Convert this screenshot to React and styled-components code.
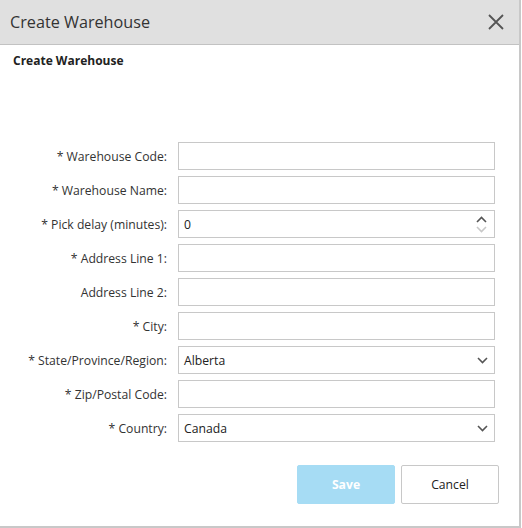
import React from "react";
import styled, { createGlobalStyle } from "styled-components";

const Global = createGlobalStyle`
  html, body { margin: 0; padding: 0; background: #ffffff; }
  body { font-family: "Open Sans", "Noto Sans", sans-serif; color: #333; }
  * { box-sizing: border-box; }
`;

const Dialog = styled.div`
  width: 521px;
  height: 528px;
  border-right: 2px solid #c8c8c8;
  border-bottom: 2px solid #c8c8c8;
  display: flex;
  flex-direction: column;
  background: #fff;
`;

const Header = styled.div`
  height: 45px;
  background: #e0e0e0;
  border-bottom: 1px solid #c2c2c2;
  display: flex;
  align-items: center;
  justify-content: space-between;
  padding: 0 14px 0 10px;
`;

const Title = styled.div`
  font-size: 16.2px;
  color: #333;
`;

const Close = styled.button`
  border: 0;
  background: transparent;
  padding: 0;
  width: 18px;
  height: 18px;
  display: flex;
  cursor: pointer;
`;

const Body = styled.div`
  flex: 1;
  display: flex;
  flex-direction: column;
  padding: 7px 0 0 13px;
`;

const Subtitle = styled.div`
  font-size: 12px;
  font-weight: 700;
  color: #222;
`;

const Form = styled.div`
  display: grid;
  grid-template-columns: 154px 317px;
  column-gap: 11px;
  row-gap: 6px;
  margin-top: 73px;
  align-items: center;
`;

const Label = styled.label`
  font-size: 12.2px;
  color: #333;
  text-align: right;
`;

const Field = styled.div`
  height: 28px;
  border: 1px solid #c8c8c8;
  background: #fff;
  display: flex;
  align-items: center;
  justify-content: space-between;
  padding: 0 6px 0 5px;
  font-size: 12.2px;
  color: #222;
`;

const Spin = styled.div`
  display: flex;
  flex-direction: column;
  gap: 3px;
  margin-right: 1px;
`;

const Actions = styled.div`
  display: flex;
  justify-content: flex-end;
  gap: 6px;
  margin-top: 23px;
  padding-right: 20px;
`;

const Button = styled.button`
  width: 98px;
  height: 39px;
  font-family: inherit;
  font-size: 12.2px;
  border-radius: 2px;
  cursor: pointer;
  border: 1px solid ${(p) => (p.$primary ? "#a6dcf4" : "#c8c8c8")};
  background: ${(p) => (p.$primary ? "#a6dcf4" : "#fff")};
  color: ${(p) => (p.$primary ? "#fff" : "#222")};
  font-weight: ${(p) => (p.$primary ? 700 : 400)};
`;

const Chevron = ({ up, color = "#555" }) => (
  <svg width="11" height="7" viewBox="0 0 11 7">
    <path
      d={up ? "M1 6 L5.5 1.5 L10 6" : "M1 1 L5.5 5.5 L10 1"}
      fill="none"
      stroke={color}
      strokeWidth="1.6"
    />
  </svg>
);

const rows = [
  { label: "* Warehouse Code:" },
  { label: "* Warehouse Name:" },
  { label: "* Pick delay (minutes):", value: "0", spin: true },
  { label: "* Address Line 1:" },
  { label: "Address Line 2:" },
  { label: "* City:" },
  { label: "* State/Province/Region:", value: "Alberta", select: true },
  { label: "* Zip/Postal Code:" },
  { label: "* Country:", value: "Canada", select: true },
];

export default function App() {
  return (
    <>
      <Global />
      <Dialog>
        <Header>
          <Title>Create Warehouse</Title>
          <Close aria-label="Close">
            <svg width="18" height="18" viewBox="0 0 18 18">
              <path d="M2 2 L16 16 M16 2 L2 16" stroke="#555" strokeWidth="1.8" />
            </svg>
          </Close>
        </Header>
        <Body>
          <Subtitle>Create Warehouse</Subtitle>
          <Form>
            {rows.map((r) => (
              <React.Fragment key={r.label}>
                <Label>{r.label}</Label>
                <Field>
                  <span>{r.value || ""}</span>
                  {r.spin && (
                    <Spin>
                      <Chevron up color="#555" />
                      <Chevron color="#c8c8c8" />
                    </Spin>
                  )}
                  {r.select && <Chevron color="#555" />}
                </Field>
              </React.Fragment>
            ))}
          </Form>
          <Actions>
            <Button $primary>Save</Button>
            <Button>Cancel</Button>
          </Actions>
        </Body>
      </Dialog>
    </>
  );
}
